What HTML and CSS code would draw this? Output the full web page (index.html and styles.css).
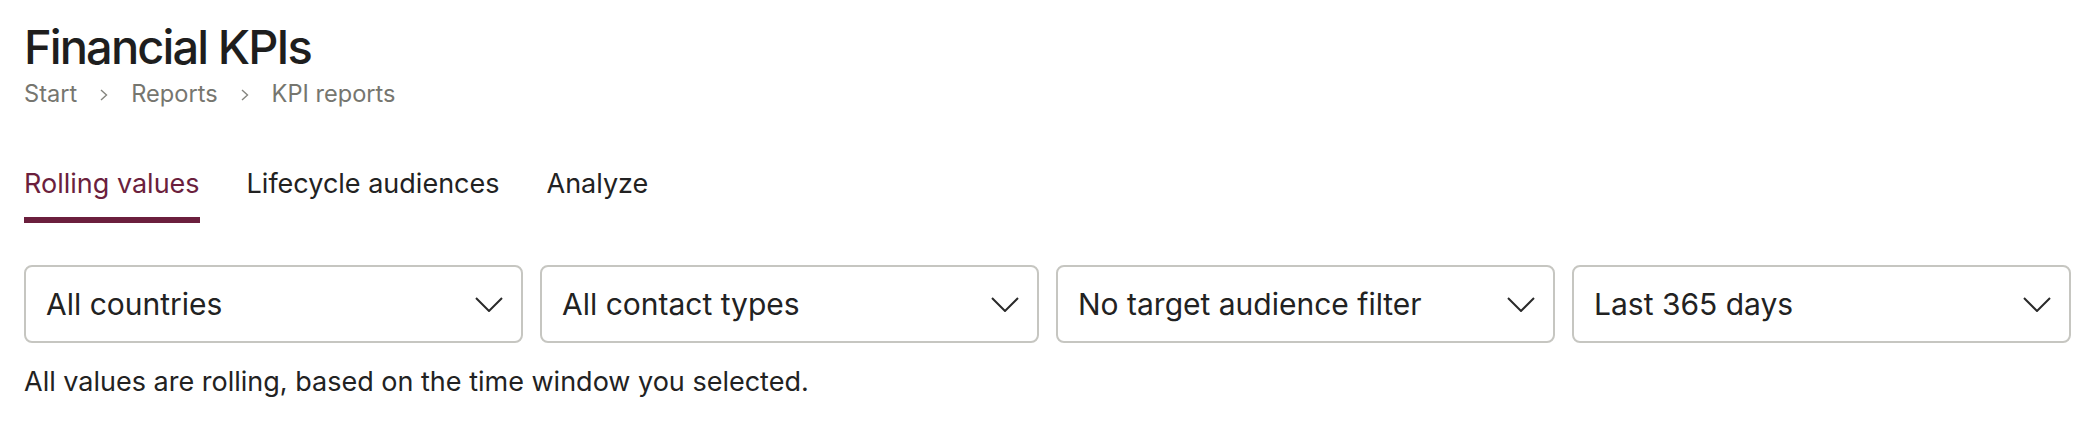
FILE: index.html
```html
<!DOCTYPE html>
<html lang="en">
<head>
<meta charset="utf-8">
<title>Financial KPIs</title>
<link rel="stylesheet" href="styles.css">
</head>
<body>
<main class="page">
  <h1 class="title">Financial KPIs</h1>
  <nav class="crumbs">
    <span class="crumb">Start</span>
    <svg class="sep" viewBox="0 0 8 12"><path d="M1 1 L6.5 6 L1 11"/></svg>
    <span class="crumb">Reports</span>
    <svg class="sep" viewBox="0 0 8 12"><path d="M1 1 L6.5 6 L1 11"/></svg>
    <span class="crumb">KPI reports</span>
  </nav>
  <div class="tabs">
    <div class="tab active">Rolling values</div>
    <div class="tab">Lifecycle audiences</div>
    <div class="tab">Analyze</div>
  </div>
  <div class="filters">
    <div class="select"><span>All countries</span><svg class="chev" viewBox="0 0 28 15"><path d="M1 1 L14 14 L27 1"/></svg></div>
    <div class="select"><span>All contact types</span><svg class="chev" viewBox="0 0 28 15"><path d="M1 1 L14 14 L27 1"/></svg></div>
    <div class="select"><span>No target audience filter</span><svg class="chev" viewBox="0 0 28 15"><path d="M1 1 L14 14 L27 1"/></svg></div>
    <div class="select"><span>Last 365 days</span><svg class="chev" viewBox="0 0 28 15"><path d="M1 1 L14 14 L27 1"/></svg></div>
  </div>
  <p class="note">All values are rolling, based on the time window you selected.</p>
</main>
</body>
</html>
```
FILE: styles.css
```css
html, body {
  margin: 0;
  padding: 0;
  background: #ffffff;
}
body {
  font-family: Inter, Roboto, "Liberation Sans", sans-serif;
  color: #222222;
}
.page {
  padding: 19px 27px 0 24px;
}
.title {
  margin: 0;
  font-size: 47px;
  line-height: 56px;
  font-weight: 500;
  letter-spacing: -1.9px;
  color: #1e1e1e;
}
.crumbs {
  margin-top: 3px;
  display: flex;
  align-items: center;
  font-size: 23.6px;
  line-height: 32px;
  color: #76766f;
}
.sep {
  width: 8px;
  height: 12px;
  margin: 2px 23px 0 23px;
  fill: none;
  stroke: #85857f;
  stroke-width: 1.4;
}
.tabs {
  margin-top: 56px;
  display: flex;
  gap: 47px;
}
.tab {
  font-size: 27px;
  line-height: 36px;
  padding-bottom: 15px;
  border-bottom: 6px solid transparent;
  color: #222222;
}
.tab.active {
  color: #6b1f3d;
  border-bottom-color: #6b1f3d;
}
.filters {
  margin-top: 42px;
  display: grid;
  grid-template-columns: repeat(4, 1fr);
  gap: 17px;
}
.select {
  height: 78px;
  box-sizing: border-box;
  border: 2px solid #c6c6c1;
  border-radius: 8px;
  display: flex;
  align-items: center;
  justify-content: space-between;
  padding: 0 18px 0 20px;
  font-size: 30px;
  line-height: 36px;
  color: #222222;
}
.chev {
  width: 28px;
  height: 15px;
  fill: none;
  stroke: #2a2a2a;
  stroke-width: 2;
}
.note {
  margin: 23px 0 0;
  font-size: 27px;
  line-height: 32px;
  color: #222222;
}
```
